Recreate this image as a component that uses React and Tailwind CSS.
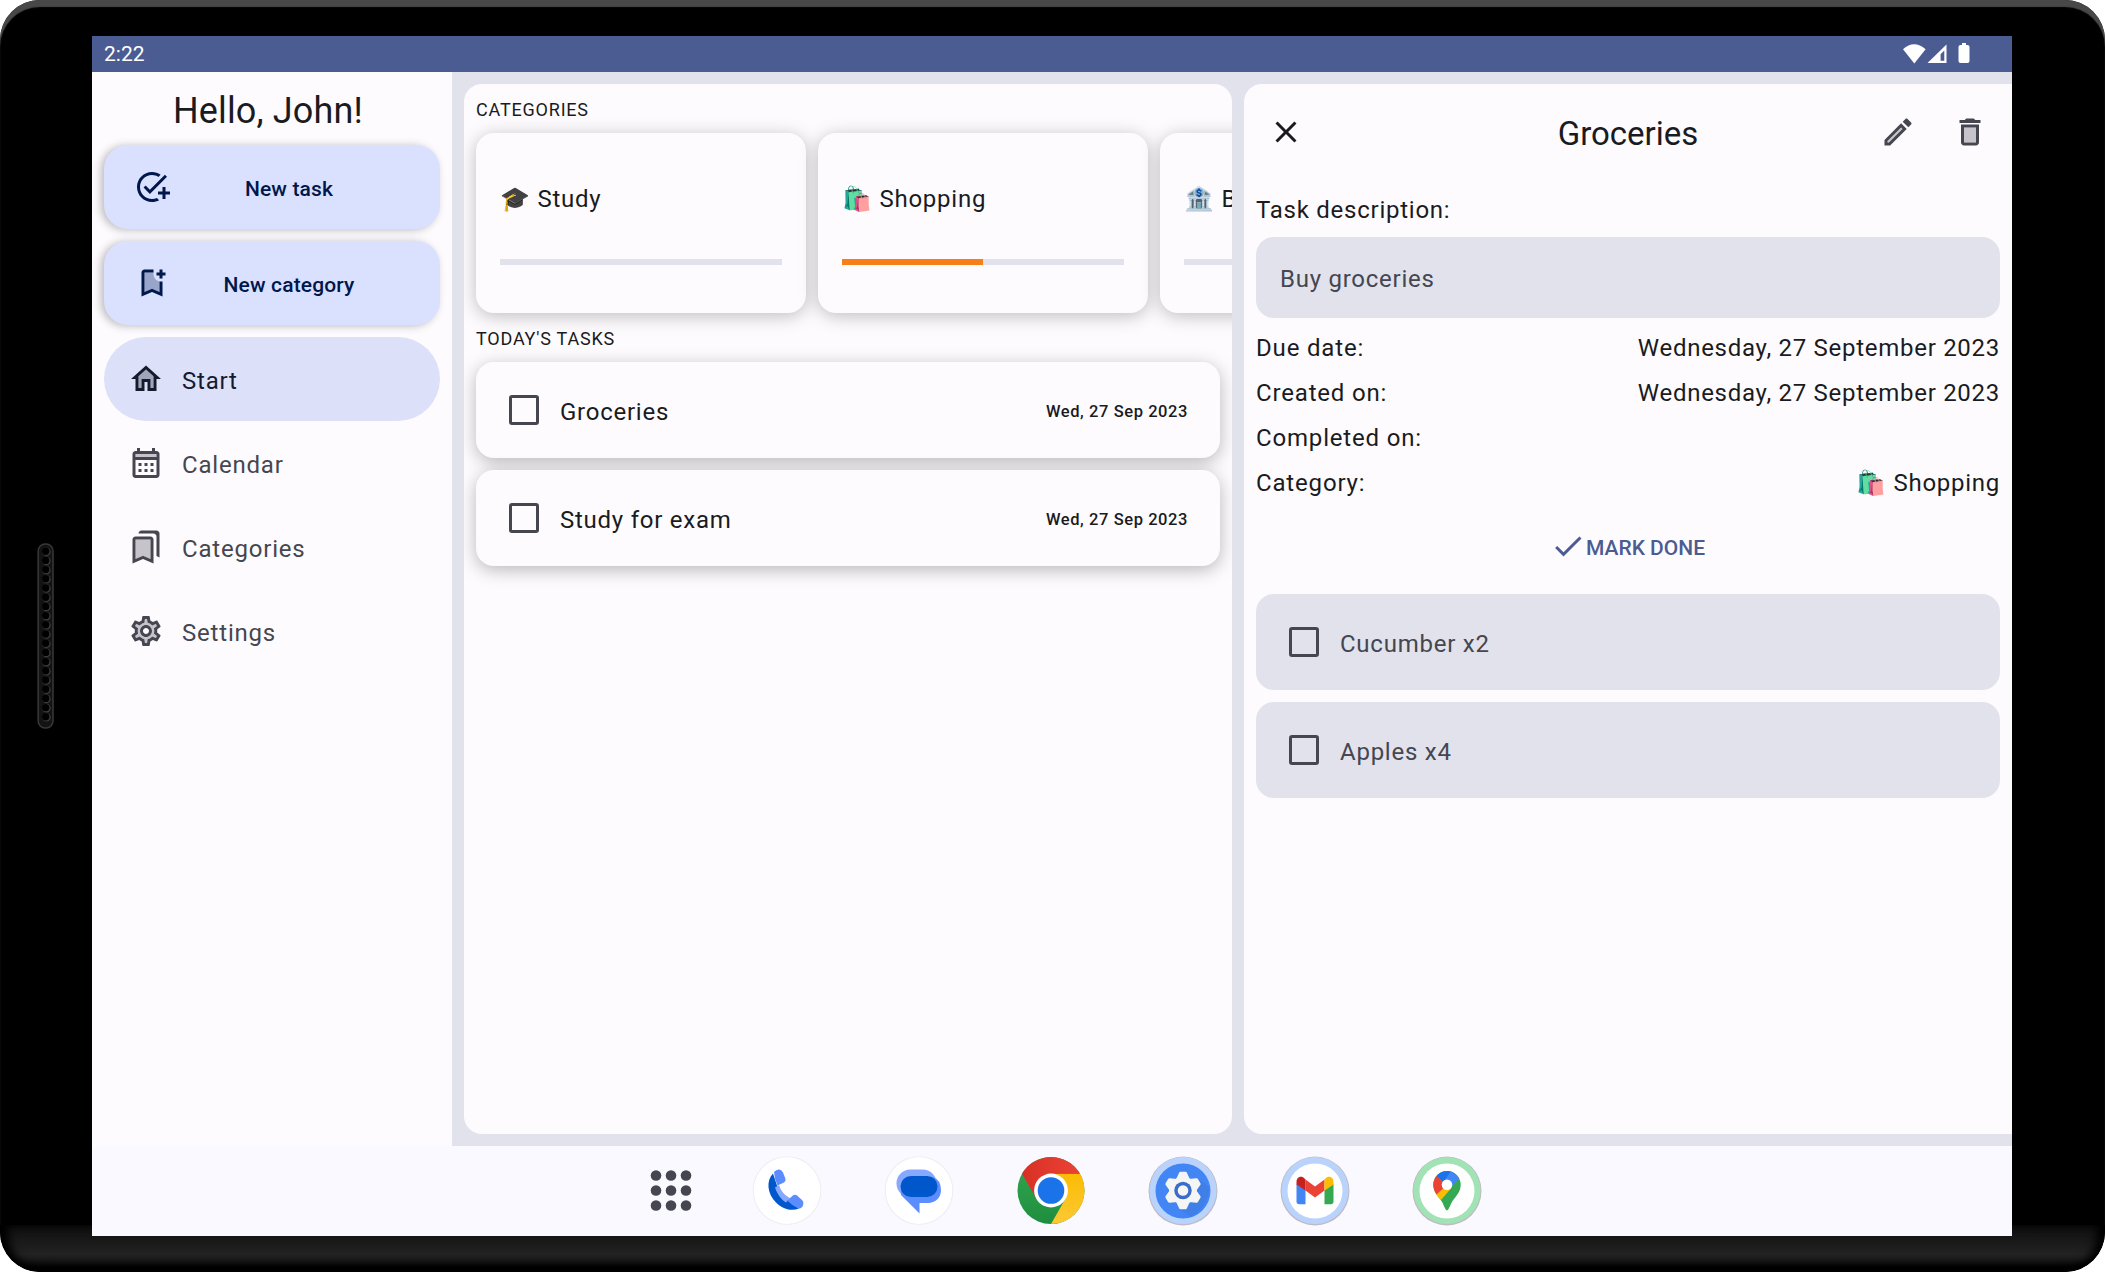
function icon(path, tone) {
  return function Icon() {
    return (
      <svg className="shrink-0" width="36" height="36" viewBox="0 0 24 24" fill="currentColor" fillRule="evenodd">
        {tone && <path d={tone} opacity=".3" />}
        <path d={path} />
      </svg>
    );
  };
}

const GEAR_INNER =
  "M17.45 11.27c.04.31.05.52.05.73 0 .21-.02.43-.05.73l-.14 1.13.89.7 1.08.84-.7 1.21-1.27-.51-1.04-.42-.9.68c-.43.32-.84.56-1.25.73l-1.06.43-.16 1.13-.2 1.35h-1.4l-.19-1.35-.16-1.13-1.06-.43c-.43-.18-.83-.41-1.23-.71l-.91-.7-1.06.43-1.27.51-.7-1.21 1.08-.84.89-.7-.14-1.13c-.03-.31-.05-.54-.05-.74s.02-.43.05-.73l.14-1.13-.89-.7-1.08-.84.7-1.21 1.27.51 1.04.42.9-.68c.43-.32.84-.56 1.25-.73l1.06-.43.16-1.13.2-1.35h1.39l.19 1.35.16 1.13 1.06.43c.43.18.83.41 1.23.71l.91.7 1.06-.43 1.27-.51.7 1.21-1.07.85-.89.7.14 1.13z";
const GEAR_HUB = "M12 8c-2.21 0-4 1.79-4 4s1.79 4 4 4 4-1.79 4-4-1.79-4-4-4z";
const GEAR_OUTER =
  "M19.43 12.98c.04-.32.07-.64.07-.98 0-.34-.03-.66-.07-.98l2.11-1.65c.19-.15.24-.42.12-.64l-2-3.46c-.09-.16-.26-.25-.44-.25-.06 0-.12.01-.17.03l-2.49 1c-.52-.4-1.08-.73-1.69-.98l-.38-2.65C14.46 2.18 14.25 2 14 2h-4c-.25 0-.46.18-.49.42l-.38 2.65c-.61.25-1.17.59-1.69.98l-2.49-1c-.06-.02-.12-.03-.18-.03-.17 0-.34.09-.43.25l-2 3.46c-.13.22-.07.49.12.64l2.11 1.65c-.04.32-.07.65-.07.98 0 .33.03.66.07.98l-2.11 1.65c-.19.15-.24.42-.12.64l2 3.46c.09.16.26.25.44.25.06 0 .12-.01.17-.03l2.49-1c.52.4 1.08.73 1.69.98l.38 2.65c.03.24.24.42.49.42h4c.25 0 .46-.18.49-.42l.38-2.65c.61-.25 1.17-.59 1.69-.98l2.49 1c.06.02.12.03.18.03.17 0 .34-.09.43-.25l2-3.46c.12-.22.07-.49-.12-.64l-2.11-1.65z";

const AddTaskIcon = icon(
  "M22 5.18L10.59 16.6l-4.24-4.24 1.41-1.41 2.83 2.83 10-10L22 5.18zM12 20c-4.41 0-8-3.59-8-8s3.59-8 8-8c1.57 0 3.04.46 4.28 1.25l1.45-1.45C16.1 2.67 14.13 2 12 2 6.48 2 2 6.48 2 12s4.48 10 10 10c1.73 0 3.36-.44 4.78-1.22l-1.5-1.5c-1 .46-2.11.72-3.28.72zM19 15h-3v2h3v3h2v-3h3v-2h-3v-3h-2v3z"
);
const BookmarkAddIcon = icon(
  "M17 11v6.97l-5-2.14-5 2.14V5h6V3H7c-1.1 0-2 .9-2 2v16l7-3 7 3V11h-2zM21 7h-2v2h-2V7h-2V5h2V3h2v2h2v2z",
  "M17 17.970V10.900C14.700 10.400 13 8.400 13 6c0-.340.030-.680.100-1H7v12.970l5-2.140z"
);
const HomeIcon = icon(
  "M12 3L2 12h3v8h6v-6h2v6h6v-8h3L12 3zM17 18h-2v-6H9v6H7v-7.810l5-4.500 5 4.500V18z",
  "M12 5.690l-5 4.500V18h2v-6h6v6h2v-7.810z"
);
const CalendarIcon = icon(
  "M19 4h-1V2h-2v2H8V2H6v2H5c-1.110 0-1.990.9-1.990 2L3 20c0 1.100.890 2 2 2h14c1.100 0 2-.9 2-2V6c0-1.100-.9-2-2-2zM19 20H5V10h14v10zM19 8H5V6h14v2zM7 12h2v2H7zM11 12h2v2h-2zM15 12h2v2h-2zM7 16h2v2H7zM11 16h2v2h-2zM15 16h2v2h-2z",
  "M5 6h14v2H5z"
);
const BookmarksIcon = icon(
  "M19 18l2 1V3c0-1.100-.9-2-2-2H8.990C7.890 1 7 1.900 7 3h10c1.100 0 2 .9 2 2v13zM15 5H5c-1.100 0-2 .9-2 2v16l7-3 7 3V7c0-1.100-.9-2-2-2zM15 19.970l-5-2.150-5 2.150V7h10z",
  "M5 19.970l5-2.150 5 2.150V7H5z"
);
const SettingsIcon = icon(
  GEAR_OUTER + GEAR_INNER + GEAR_HUB + "M12 14c-1.100 0-2-.9-2-2s.9-2 2-2 2 .9 2 2-.9 2-2 2z",
  GEAR_INNER + GEAR_HUB
);
const EditIcon = icon(
  "M20.710 7.040c.390-.390.390-1.020 0-1.410l-2.340-2.340c-.2-.2-.450-.290-.710-.290s-.510.100-.700.290l-1.830 1.830 3.750 3.750 1.830-1.830zM3 17.250V21h3.750L17.810 9.940l-3.750-3.750L3 17.250zM5.920 19H5v-.920l9.060-9.060.920.920L5.920 19z",
  "M5 18.080V19h.920l9.060-9.060-.920-.920z"
);
const DeleteIcon = icon(
  "M15.500 4l-1-1h-5l-1 1H5v2h14V4h-3.500zM6 19c0 1.100.9 2 2 2h8c1.100 0 2-.9 2-2V7H6v12zM8 9h8v10H8V9z",
  "M8 9h8v10H8z"
);
const CloseIcon = icon("M19 6.410L17.590 5 12 10.590 6.410 5 5 6.410 10.590 12 5 17.590 6.410 19 12 13.410 17.590 19 19 17.590 13.410 12z");
const CheckIcon = icon("M9 16.170L4.830 12l-1.420 1.410L9 19 21 7l-1.410-1.410z");

function Status() {
  return (
    <div className="flex h-[36px] shrink-0 items-center justify-between bg-[#4a5c92] pl-[12px] pr-[40px] text-white">
      <span className="pt-px text-[21px] leading-[35px]">2:22</span>
      <svg width="70" height="24" viewBox="0 0 70 24" fill="#fff">
        <path d="M1 7.2Q12 -2.6 23.600 7.2L12.300 21.500Z" />
        <path d="M44.500 2.500V21H25.500ZM42.300 8.500L38.600 12.200V18.800H42.300Z" fillRule="evenodd" />
        <path d="M60 1h4v2h1.500q2 0 2 2v14q0 2-2 2h-7q-2 0-2-2v-14q0-2 2-2h1.500z" />
      </svg>
    </div>
  );
}

function Fab({ icon: Icon, label }) {
  return (
    <button className="flex h-[84px] items-center rounded-[24px] bg-[#dae1ff] pl-[30px] pr-[32px] text-[#00174b] shadow-[-3px_1px_9px_rgba(0,0,0,0.26)]">
      <Icon />
      <span className="flex-1 pt-[6px] text-center text-[21px] font-medium tracking-[0.15px]">{label}</span>
    </button>
  );
}

function NavItem({ icon: Icon, label, active }) {
  return (
    <div className={"flex h-[84px] items-center gap-[18px] rounded-full pl-[24px] " + (active ? "bg-[#dce1f9] text-[#151b2c]" : "text-[#45464f]")}>
      <Icon />
      <span className="pt-[3px] text-[24px] tracking-[0.8px]">{label}</span>
    </div>
  );
}

function Sidebar() {
  return (
    <aside className="flex w-[360px] shrink-0 flex-col overflow-hidden bg-[#fefbff] px-[12px]">
      <h1 className="mt-[15px] h-[46px] pr-[8px] text-center text-[36px] leading-[48px] tracking-[0.15px]">Hello, John!</h1>
      <div className="mt-[12px] flex flex-col gap-[12px]">
        <Fab icon={AddTaskIcon} label="New task" />
        <Fab icon={BookmarkAddIcon} label="New category" />
      </div>
      <nav className="mt-[12px]">
        <NavItem icon={HomeIcon} label="Start" active />
        <NavItem icon={CalendarIcon} label="Calendar" />
        <NavItem icon={BookmarksIcon} label="Categories" />
        <NavItem icon={SettingsIcon} label="Settings" />
      </nav>
    </aside>
  );
}

function CategoryCard({ name, progress }) {
  return (
    <div className="flex h-[180px] w-[330px] shrink-0 flex-col rounded-[18px] bg-[#fefbff] px-[24px] pt-[48px] shadow-[0_3px_18px_rgba(0,0,0,0.25)]">
      <div className="h-[36px] whitespace-nowrap text-[24px] leading-[36px] tracking-[0.75px]">{name}</div>
      <div className="mt-[42px] h-[6px] bg-[#e1e2ec]">
        <div className="h-full bg-[#f77f17]" style={{ width: progress + "%" }} />
      </div>
    </div>
  );
}

function Check() {
  return <div className="size-[30px] shrink-0 rounded-[3px] border-[3px] border-[#45464f]" />;
}

function TaskCard({ name }) {
  return (
    <div className="flex h-[96px] items-center rounded-[18px] bg-[#fefbff] pl-[33px] pr-[32px] shadow-[0_4px_18px_rgba(0,0,0,0.27)]">
      <Check />
      <span className="ml-[21px] flex-1 pt-[3px] text-[24px] tracking-[0.75px]">{name}</span>
      <span className="pt-[4px] text-[16.5px] font-medium tracking-[0.58px]">Wed, 27 Sep 2023</span>
    </div>
  );
}

function Heading({ children }) {
  return <h2 className="mt-[14px] h-[24px] text-[18px] leading-[24px] tracking-[0.8px]">{children}</h2>;
}

function Home() {
  return (
    <section className="w-[768px] shrink-0 overflow-hidden rounded-[18px] bg-[#fefbff] px-[12px]">
      <Heading>CATEGORIES</Heading>
      <div className="mt-[11px] flex gap-[12px]">
        <CategoryCard name="🎓 Study" progress={0} />
        <CategoryCard name="🛍️ Shopping" progress={50} />
        <CategoryCard name="🏦 Bills" progress={0} />
      </div>
      <Heading>TODAY'S TASKS</Heading>
      <div className="mt-[11px] flex flex-col gap-[12px]">
        <TaskCard name="Groceries" />
        <TaskCard name="Study for exam" />
      </div>
    </section>
  );
}

function Row({ label, value }) {
  return (
    <div className="flex h-[45px] items-center justify-between text-[24px] leading-[36px]">
      <span className="tracking-[0.83px]">{label}</span>
      <span className="tracking-[0.72px]">{value}</span>
    </div>
  );
}

function SubTask({ name }) {
  return (
    <div className="flex h-[96px] items-center rounded-[18px] bg-[#e1e2ec] pl-[33px] text-[#45464f]">
      <Check />
      <span className="ml-[21px] pt-[3px] text-[24px] tracking-[0.75px]">{name}</span>
    </div>
  );
}

function Detail() {
  return (
    <section className="flex flex-1 flex-col rounded-l-[18px] bg-[#fefbff] px-[12px]">
      <header className="flex h-[96px] items-center justify-between pl-[12px] pr-[12px]">
        <div className="w-[108px]"><CloseIcon /></div>
        <h1 className="pt-[4px] text-[33px]">Groceries</h1>
        <div className="flex w-[108px] gap-[36px] text-[#45464f]">
          <EditIcon />
          <DeleteIcon />
        </div>
      </header>
      <div className="mt-[12px] h-[36px] text-[24px] leading-[36px] tracking-[0.75px]">Task description:</div>
      <div className="mt-[9px] flex h-[81px] items-center rounded-[18px] bg-[#e1e2ec] px-[24px] pt-[2px] text-[24px] tracking-[0.75px] text-[#45464f]">Buy groceries</div>
      <div className="mt-[7px]">
        <Row label="Due date:" value="Wednesday, 27 September 2023" />
        <Row label="Created on:" value="Wednesday, 27 September 2023" />
        <Row label="Completed on:" value="" />
        <Row label="Category:" value="🛍️ Shopping" />
      </div>
      <button className="mt-[23px] flex h-[36px] items-center justify-center pr-px text-[#4a5c92]">
        <CheckIcon />
        <span className="pt-[4px] text-[21px] font-medium leading-[36px]">MARK DONE</span>
      </button>
      <div className="mt-[30px] flex flex-col gap-[12px]">
        <SubTask name="Cucumber x2" />
        <SubTask name="Apples x4" />
      </div>
    </section>
  );
}

function Dock() {
  return (
    <footer className="flex h-[90px] shrink-0 items-center gap-[60px] bg-[#f9f9ff] pl-[543px]">
      <svg className="-mr-[16px]" width="72" height="72" viewBox="-36 -36 72 72" fill="#45464f">
        {[-15, 0, 15].map((y) => [-15, 0, 15].map((x) => <circle key={x + "," + y} cx={x} cy={y - 0.5} r="5.3" />))}
      </svg>
      <svg width="72" height="72" viewBox="-36 -36 72 72">
        <circle cy="-0.500" r="34.300" fill="#ececf2" />
        <circle cy="-0.500" r="33.400" fill="#fff" />
        <g transform="translate(0 -.5)">
          <path d="M-14-17C-21-10-20 3-11 12C-4 19 5 21 12 18L1 10L-10-5Z" fill="#0057cc" />
          <path d="M-12-3L-8-5.500C-6 1-2 5 3 7.500L-1 12C-6 9-10 3-12-3Z" fill="#86a9ff" />
          <path d="M-13-18.500Q-7-23.500-4-18L-1.500-11.500Q-1-9-3-8L-9.500-5Q-12.500-11-13-18.500Z" fill="#5b8dff" />
          <path d="M0 10L6 5Q8 3.500 10 5L15 9.500Q17.500 12 15.500 16Q14 18.500 11.500 18Q5 15 0 10Z" fill="#5b8dff" />
        </g>
      </svg>
      <svg width="72" height="72" viewBox="-36 -36 72 72">
        <circle cy="-0.500" r="34.300" fill="#ececf2" />
        <circle cy="-0.500" r="33.400" fill="#fff" />
        <rect x="-22.500" y="-21.500" width="40" height="28" rx="14" fill="#86a9ff" />
        <path d="M-18 4V0Q-14-14-4-14H14Q22-11 22-1C22 7 16 12 9 12H.5V22.500Z" fill="#5b8dff" />
        <rect x="-18.500" y="-15" width="37" height="21" rx="10.500" fill="#0057cc" />
      </svg>
      <svg width="72" height="72" viewBox="-36 -36 72 72">
        <defs>
          <linearGradient id="cr"><stop stopColor="#d93025" /><stop offset="1" stopColor="#ea4335" /></linearGradient>
          <linearGradient id="cg" x2="0" y2="1"><stop stopColor="#34a853" /><stop offset="1" stopColor="#1e8e3e" /></linearGradient>
          <linearGradient id="cy" x2="0" y2="1"><stop stopColor="#fbbc04" /><stop offset="1" stopColor="#fcc934" /></linearGradient>
        </defs>
        <g transform="translate(0 -.5)">
          <circle r="33.500" fill="url(#cg)" />
          <path d="M0-16.750H29.010A33.500 33.500 0 0 1 0 33.500L14.500 8.370Z" fill="url(#cy)" />
          <path d="M-29.010-16.750A33.500 33.500 0 0 1 29.010-16.750H0L-14.500 8.370Z" fill="url(#cr)" />
          <circle r="16.900" fill="#fff" />
          <circle r="13.300" fill="#1a73e8" />
        </g>
      </svg>
      <svg width="72" height="72" viewBox="-36 -36 72 72">
        <circle r="34.500" fill="#bdbcc5" />
        <circle cy="-0.500" r="33.500" fill="#bad3fc" />
        <circle r="27.500" fill="#4285f4" />
        <path d="M16-12L26-4Q26 15 8 26L-4 18Z" fill="#4079e0" opacity=".6" />
        <g transform="translate(0 -.5)" fill="#f5f5f5">
          <circle r="13.800" />
          {[0, 60, 120, 180, 240, 300].map((a) => (
            <path key={a} d="M-7-11L-4-17.500Q-3.700-18.700-2.500-18.700H2.500Q3.700-18.700 4-17.500L7-11Z" transform={"rotate(" + a + ")"} />
          ))}
          <circle r="8.700" fill="#3a6dc9" />
          <circle r="5.300" />
        </g>
      </svg>
      <svg width="72" height="72" viewBox="-36 -36 72 72">
        <circle r="34.500" fill="#bdbcc5" />
        <circle cy="-0.500" r="33.500" fill="#bad3fc" />
        <circle r="27.500" fill="#fff" />
        <path d="M-18.500-7L-9.500-1V13.300H-15.700Q-18.500 13.300-18.500 10.500Z" fill="#4285f4" />
        <path d="M18.500-7L9.500-1V13.300H15.700Q18.500 13.300 18.500 10.500Z" fill="#34a853" />
        <path d="M-9.500-11.500L0-4.500L9.500-11.500V-.5L0 6.500L-9.500-.5Z" fill="#ea4335" />
        <path d="M-18.500-9C-18.500-14.500-13-15.500-10.500-12.500L-9.500-11.500V-.5L-18.500-6.500Z" fill="#c5221f" />
        <path d="M18.500-9C18.500-14.500 13-15.500 10.500-12.500L9.500-11.500V-.5L18.500-6.500Z" fill="#fbbc04" />
      </svg>
      <svg width="72" height="72" viewBox="-36 -36 72 72">
        <defs>
          <clipPath id="pin"><path d="M0-20A13.700 13.700 0 0 1 13.700-6.300C13.700 1 9 5 5.500 10C3 14 2 19 0 19.500C-2 19-3 14-5.500 10C-9 5-13.700 1-13.700-6.300A13.700 13.700 0 0 1 0-20Z" /></clipPath>
        </defs>
        <circle r="34.500" fill="#bdbcc5" />
        <circle cy="-0.500" r="33.500" fill="#a1e3b5" />
        <circle r="27.500" fill="#fff" />
        <g clipPath="url(#pin)">
          <rect x="-20" y="-22" width="40" height="44" fill="#34a853" />
          <path d="M-20 4L0-6.300L4-2.500L-6 9L-20 22Z" fill="#fbbc04" />
          <path d="M-20-20L-10.500-15L0-6.300L-11 4L-20 6Z" fill="#ea4335" />
          <path d="M-10.500-15L-14-24H8L0-6.300Z" fill="#1a73e8" />
          <path d="M4-20L6-24H20V-14L12-12.500L3-3L0-6.300L-3-10Z" fill="#4285f4" />
        </g>
        <circle cy="-6.300" r="5.300" fill="#fff" />
      </svg>
    </footer>
  );
}

const HOLES = Array.from({ length: 19 }, (_, i) => 8.5 + i * 9.2);

function Speaker() {
  return (
    <svg className="absolute left-[37px] top-[543px]" width="17" height="186" viewBox="0 0 17 186">
      <rect x="1.200" y="1" width="14.800" height="184" rx="7" fill="#131313" stroke="#383838" strokeWidth="1.500" />
      {HOLES.map((y) => (
        <g key={y}>
          <circle cx="9.400" cy={y + 0.2} r="4.300" fill="#3c3c3c" />
          <circle cx="8.700" cy={y - 0.3} r="3.700" fill="#000" />
        </g>
      ))}
    </svg>
  );
}

export default function App() {
  return (
    <div className="h-[1272px] w-[2105px] bg-white font-['Roboto',sans-serif] text-[#1a1b21]">
      <div className="relative h-full w-full overflow-hidden rounded-[40px] bg-black pl-[92px] pt-[36px] shadow-[inset_0_7px_1px_#484848]">
        <div className="absolute inset-x-0 bottom-0 h-[47px] rounded-b-[40px] bg-[linear-gradient(to_bottom,#0e0e0e_0,#222_29px,#1c1c1c_33px,#000_43px)] shadow-[inset_10px_0_8px_-2px_#000,inset_-10px_0_8px_-2px_#000]" />
        <Speaker />
        <main className="relative flex h-[1200px] w-[1920px] flex-col overflow-hidden">
          <Status />
          <div className="flex h-[1074px] bg-[#e1e2ec]">
            <Sidebar />
            <div className="flex flex-1 gap-[12px] py-[12px] pl-[12px]">
              <Home />
              <Detail />
            </div>
          </div>
          <Dock />
        </main>
      </div>
    </div>
  );
}
